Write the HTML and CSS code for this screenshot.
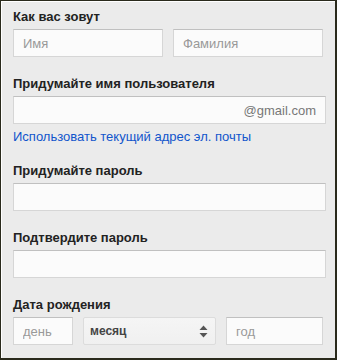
FILE: index.html
```html
<!DOCTYPE html>
<html>
<head>
    <meta charset="utf-8">
    <link rel="stylesheet" href="styles.css">
</head>
<body>
    <div class="frame">
        <form class="signup">
            <!-- Имя и фамилия -->
            <div class="field">
                <div class="field-label">Как вас зовут</div>
                <div class="row">
                    <input type="text" class="text-input half" placeholder="Имя">
                    <input type="text" class="text-input half" placeholder="Фамилия">
                </div>
            </div>

            <!-- Имя пользователя -->
            <div class="field">
                <div class="field-label">Придумайте имя пользователя</div>
                <div class="text-input wide username">
                    <input type="text" class="bare-input">
                    <span class="domain">@gmail.com</span>
                </div>
                <a href="#" class="field-link">Использовать текущий адрес эл. почты</a>
            </div>

            <div class="field field-after-link">
                <div class="field-label">Придумайте пароль</div>
                <input type="password" class="text-input wide">
            </div>

            <div class="field">
                <div class="field-label">Подтвердите пароль</div>
                <input type="password" class="text-input wide">
            </div>

            <!-- Дата рождения -->
            <div class="field">
                <div class="field-label">Дата рождения</div>
                <div class="row">
                    <input type="text" class="text-input day" placeholder="день">
                    <div class="fake-select">
                        <span>месяц</span>
                        <svg class="select-arrows" width="9" height="13" viewBox="0 0 9 13">
                            <path d="M4.5 0.5 L8.5 5 L0.5 5 Z" fill="#555"/>
                            <path d="M0.5 8 L8.5 8 L4.5 12.5 Z" fill="#555"/>
                        </svg>
                    </div>
                    <input type="text" class="text-input year" placeholder="год">
                </div>
            </div>
        </form>
    </div>
</body>
</html>
```

FILE: styles.css
```css
* {
    margin: 0;
    padding: 0;
    box-sizing: border-box;
    font-family: "Liberation Sans", Arial, sans-serif;
}

body {
    background: #ebebeb;
}

.frame {
    width: 337px;
    height: 360px;
    background: #ebebeb;
    border: 1px solid #2a2a1c;
    border-right-width: 2px;
    border-bottom-width: 2px;
    box-shadow: inset 1px 1px 0 #ffffff;
    overflow: hidden;
}

.signup {
    padding: 8px 0 0 12px;
}

/* Поля формы */
.field {
    margin-bottom: 19px;
}

.field-label {
    font-size: 13px;
    line-height: 16px;
    font-weight: bold;
    color: #222;
    margin-bottom: 4px;
}

.row {
    display: flex;
    gap: 10px;
}

.text-input {
    display: block;
    height: 28px;
    padding: 0 9px;
    font-size: 13px;
    color: #333;
    background: #fbfbfb;
    border: 1px solid #d6d6d6;
    border-top-color: #c0c0c0;
    outline: none;
}

.text-input::placeholder {
    color: #999;
}

.half {
    width: 150px;
}

.wide {
    width: 313px;
}

.username {
    display: flex;
    align-items: center;
}

.bare-input {
    flex: 1;
    min-width: 0;
    border: none;
    background: transparent;
    outline: none;
    font-size: 13px;
}

.domain {
    font-size: 13px;
    color: #777;
}

.field-link {
    display: block;
    margin-top: 5px;
    font-size: 13px;
    line-height: 16px;
    color: #15c;
    text-decoration: none;
}

.field-after-link {
    margin-top: -1px;
}

/* Дата рождения */
.day {
    width: 60px;
}

.fake-select {
    width: 133px;
    height: 28px;
    display: flex;
    align-items: center;
    justify-content: space-between;
    padding: 0 7px 0 6px;
    font-size: 12px;
    font-weight: bold;
    color: #444;
    background: linear-gradient(#f5f5f5, #f0f0f0);
    border: 1px solid #dcdcdc;
    border-radius: 2px;
}

.year {
    width: 97px;
}
```
